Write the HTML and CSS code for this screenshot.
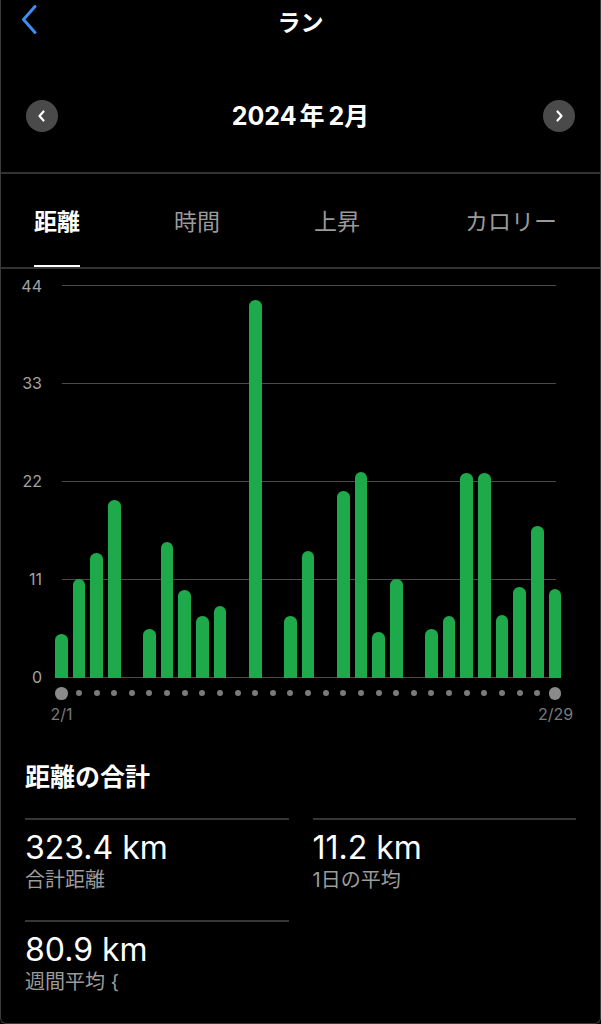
FILE: index.html
```html
<!DOCTYPE html>
<html lang="ja">
<head>
<meta charset="utf-8">
<title>ラン</title>
<link rel="stylesheet" href="styles.css">
</head>
<body>
<div class="frame">
  <header class="topbar">
    <svg class="back" width="20" height="30" viewBox="0 0 20 30" aria-hidden="true">
      <polyline points="15,1.5 3.5,14.5 15,27.5" fill="none" stroke="#3d8ef0" stroke-width="3" stroke-linecap="round" stroke-linejoin="round"/>
    </svg>
    <h1 class="title">ラン</h1>
    <span></span>
  </header>

  <nav class="monthnav">
    <button class="circle" aria-label="前月">
      <svg width="10" height="14" viewBox="0 0 10 14"><polyline points="6.5,2.5 2.5,7 6.5,11.5" fill="none" stroke="#fff" stroke-width="2.2" stroke-linecap="round" stroke-linejoin="round"/></svg>
    </button>
    <div class="month">2024<span class="unit">年</span>2月</div>
    <button class="circle" aria-label="翌月">
      <svg width="10" height="14" viewBox="0 0 10 14"><polyline points="3.5,2.5 7.5,7 3.5,11.5" fill="none" stroke="#fff" stroke-width="2.2" stroke-linecap="round" stroke-linejoin="round"/></svg>
    </button>
  </nav>

  <div class="tabs">
    <div class="tab active">距離</div>
    <div class="tab">時間</div>
    <div class="tab">上昇</div>
    <div class="tab tab-last">カロリー</div>
  </div>

  <section class="chart">
    <div class="gridlines">
      <div class="gline"><span class="ylab">44</span><span class="rule"></span></div>
      <div class="gline"><span class="ylab">33</span><span class="rule"></span></div>
      <div class="gline"><span class="ylab">22</span><span class="rule"></span></div>
      <div class="gline"><span class="ylab">11</span><span class="rule"></span></div>
      <div class="gline"><span class="ylab">0</span><span class="rule"></span></div>
    </div>
    <div class="bars">
      <div class="bar" style="height:44.2px"></div>
      <div class="bar" style="height:99.5px"></div>
      <div class="bar" style="height:124.8px"></div>
      <div class="bar" style="height:178.5px"></div>
      <div class="bar" style="height:0px"></div>
      <div class="bar" style="height:49.5px"></div>
      <div class="bar" style="height:135.8px"></div>
      <div class="bar" style="height:88.5px"></div>
      <div class="bar" style="height:62.5px"></div>
      <div class="bar" style="height:72.2px"></div>
      <div class="bar" style="height:0px"></div>
      <div class="bar" style="height:378.2px"></div>
      <div class="bar" style="height:0px"></div>
      <div class="bar" style="height:62.5px"></div>
      <div class="bar" style="height:126.8px"></div>
      <div class="bar" style="height:0px"></div>
      <div class="bar" style="height:187.5px"></div>
      <div class="bar" style="height:205.8px"></div>
      <div class="bar" style="height:45.8px"></div>
      <div class="bar" style="height:98.8px"></div>
      <div class="bar" style="height:0px"></div>
      <div class="bar" style="height:49.2px"></div>
      <div class="bar" style="height:62.2px"></div>
      <div class="bar" style="height:205.5px"></div>
      <div class="bar" style="height:205.5px"></div>
      <div class="bar" style="height:63.5px"></div>
      <div class="bar" style="height:90.8px"></div>
      <div class="bar" style="height:151.8px"></div>
      <div class="bar" style="height:89.2px"></div>
    </div>
  </section>

  <div class="dots">
    <span class="cell"><span class="dot big"></span></span>
    <span class="cell"><span class="dot"></span></span>
    <span class="cell"><span class="dot"></span></span>
    <span class="cell"><span class="dot"></span></span>
    <span class="cell"><span class="dot"></span></span>
    <span class="cell"><span class="dot"></span></span>
    <span class="cell"><span class="dot"></span></span>
    <span class="cell"><span class="dot"></span></span>
    <span class="cell"><span class="dot"></span></span>
    <span class="cell"><span class="dot"></span></span>
    <span class="cell"><span class="dot"></span></span>
    <span class="cell"><span class="dot"></span></span>
    <span class="cell"><span class="dot"></span></span>
    <span class="cell"><span class="dot"></span></span>
    <span class="cell"><span class="dot"></span></span>
    <span class="cell"><span class="dot"></span></span>
    <span class="cell"><span class="dot"></span></span>
    <span class="cell"><span class="dot"></span></span>
    <span class="cell"><span class="dot"></span></span>
    <span class="cell"><span class="dot"></span></span>
    <span class="cell"><span class="dot"></span></span>
    <span class="cell"><span class="dot"></span></span>
    <span class="cell"><span class="dot"></span></span>
    <span class="cell"><span class="dot"></span></span>
    <span class="cell"><span class="dot"></span></span>
    <span class="cell"><span class="dot"></span></span>
    <span class="cell"><span class="dot"></span></span>
    <span class="cell"><span class="dot"></span></span>
    <span class="cell"><span class="dot big"></span></span>
  </div>
  <div class="dates"><span>2/1</span><span>2/29</span></div>

  <section class="summary">
    <h2 class="summary-title">距離の合計</h2>
    <div class="stats">
      <div class="stat">
        <div class="value">323.4 km</div>
        <div class="label">合計距離</div>
      </div>
      <div class="stat">
        <div class="value">11.2 km</div>
        <div class="label">1日の平均</div>
      </div>
      <div class="stat">
        <div class="value">80.9 km</div>
        <div class="label">週間平均 {</div>
      </div>
    </div>
  </section>
</div>
</body>
</html>
```

FILE: styles.css
```css
html, body {
  margin: 0;
  padding: 0;
  background: #000;
}

body {
  font-family: Inter, "Noto Sans CJK JP", sans-serif;
  color: #fff;
}

.frame {
  height: 1024px;
  box-sizing: border-box;
  border: 1px solid #3a3a3a;
  border-top: none;
  border-radius: 0 0 6px 6px;
  overflow: hidden;
}

/* header */
.topbar {
  display: grid;
  grid-template-columns: 1fr auto 1fr;
  align-items: start;
  height: 46px;
}

.back {
  margin: 5px 0 0 19px;
  display: block;
}

.title {
  margin: 0;
  font-size: 23px;
  line-height: 46px;
  font-weight: 700;
}

/* month navigation */
.monthnav {
  display: flex;
  align-items: center;
  justify-content: space-between;
  height: 128px;
  box-sizing: border-box;
  padding: 13px 25px 0 25px;
  border-bottom: 2px solid #333;
}

.circle {
  width: 32px;
  height: 32px;
  border-radius: 50%;
  border: none;
  padding: 0;
  background: #4a4a4a;
  display: flex;
  align-items: center;
  justify-content: center;
}

.circle svg {
  display: block;
}

.month {
  font-size: 25px;
  font-weight: 700;
  line-height: 30px;
}

.unit {
  margin: 0 4px 0 3px;
}

/* tabs */
.tabs {
  display: flex;
  gap: 94px;
  padding-left: 33px;
  height: 95px;
  box-sizing: border-box;
  border-bottom: 2px solid #333;
}

.tab {
  display: flex;
  flex-direction: column;
  justify-content: space-between;
  padding-top: 33px;
  font-size: 23px;
  line-height: 30px;
  color: #9a9a9a;
}

.tab::after {
  content: "";
  height: 2px;
}

.tab.active {
  color: #fff;
  font-weight: 700;
}

.tab.active::after {
  background: #fff;
}

.tab-last {
  margin-left: 11px;
}

/* chart */
.chart {
  display: grid;
  margin-top: 16px;
}

.gridlines,
.bars {
  grid-area: 1 / 1;
}

.gridlines {
  display: flex;
  flex-direction: column;
  justify-content: space-between;
  height: 392.8px;
}

.gline {
  display: flex;
  align-items: center;
  height: 1px;
}

.ylab {
  width: 41px;
  text-align: right;
  font-size: 16px;
  line-height: 0;
  color: #a3a3a3;
}

.rule {
  margin-left: 20px;
  width: 494px;
  height: 1px;
  background: #4a4a4a;
}

.bars {
  display: flex;
  align-items: flex-end;
  gap: 4.95px;
  padding-left: 54px;
  height: 393px;
}

.bar {
  width: 12.7px;
  background: #1eaa4b;
  border-radius: 6.35px 6.35px 0 0;
}

/* day dots */
.dots {
  display: flex;
  align-items: center;
  gap: 4.95px;
  padding-left: 54px;
  margin-top: 9px;
  height: 12.7px;
}

.cell {
  width: 12.7px;
  display: flex;
  justify-content: center;
}

.dot {
  width: 6px;
  height: 6px;
  border-radius: 50%;
  background: #7a7a7a;
}

.dot.big {
  width: 12.7px;
  height: 12.7px;
  background: #8a8a8a;
}

.dates {
  display: flex;
  justify-content: space-between;
  width: 534px;
  margin: 4px 0 0 40.5px;
  font-size: 16px;
  line-height: 20px;
  color: #7a7a7a;
}

.dates span {
  width: 40px;
  text-align: center;
}

/* summary */
.summary {
  padding: 0 24px;
}

.summary-title {
  margin: 37px 0 0;
  font-size: 25px;
  line-height: 32px;
  font-weight: 700;
}

.stats {
  display: grid;
  grid-template-columns: 1fr 1fr;
  column-gap: 24px;
  margin-top: 25px;
}

.stat {
  border-top: 2px solid #363636;
  padding: 9px 0 27px;
}

.value {
  font-size: 32px;
  line-height: 38px;
  font-weight: 400;
}

.label {
  font-size: 20px;
  line-height: 26px;
  color: #9c9c9c;
}
```
